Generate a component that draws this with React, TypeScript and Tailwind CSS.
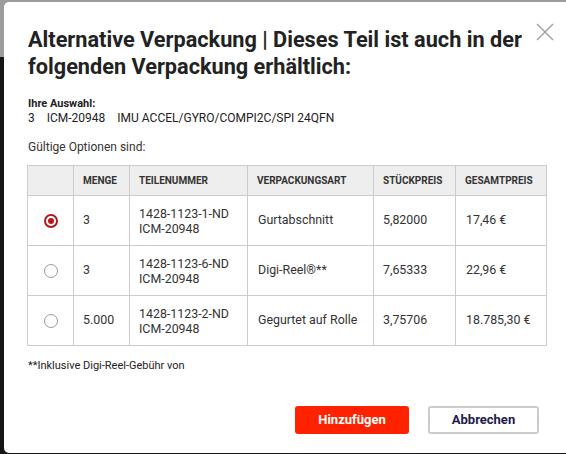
import React from "react";

const rows = [
  { sel: true, qty: "3", pn: ["1428-1123-1-ND", "ICM-20948"], pack: "Gurtabschnitt", unit: "5,82000", total: "17,46 €" },
  { sel: false, qty: "3", pn: ["1428-1123-6-ND", "ICM-20948"], pack: "Digi-Reel®**", unit: "7,65333", total: "22,96 €" },
  { sel: false, qty: "5.000", pn: ["1428-1123-2-ND", "ICM-20948"], pack: "Gegurtet auf Rolle", unit: "3,75706", total: "18.785,30 €" },
];

function Radio({ checked }: { checked: boolean }) {
  return checked ? (
    <span className="flex h-[14px] w-[14px] items-center justify-center rounded-full border-2 border-[#b21a1a]">
      <span className="h-[6px] w-[6px] rounded-full bg-[#b21a1a]" />
    </span>
  ) : (
    <span className="block h-[14px] w-[14px] rounded-full border border-[#9a9a9a] bg-white" />
  );
}

export default function App() {
  return (
    <div
      className="relative h-[454px] w-[566px] overflow-hidden bg-[#161616] pl-[4px] pt-[2px]"
      style={{ fontFamily: "Roboto, 'Noto Sans', sans-serif" }}
    >
      <div className="absolute left-0 top-0 h-[57px] w-full bg-[#9c9c9c]" />
      <div className="relative h-[451px] w-[600px] rounded-[5px] bg-white pl-[24px] pt-[24px] text-[#333]">
        <button className="absolute left-[531px] top-[20px] flex h-[20px] w-[20px] items-center justify-center">
          <svg width="18" height="18" viewBox="0 0 18 18">
            <path d="M1 1 L17 17 M17 1 L1 17" stroke="#9a9a9a" strokeWidth="1.3" fill="none" />
          </svg>
        </button>
        <h1 className="w-[520px] text-[21.7px] font-bold leading-[27px] text-[#222]">
          Alternative Verpackung | Dieses Teil ist auch in der folgenden Verpackung erhältlich:
        </h1>
        <div className="mt-[17px] text-[11px] leading-[14px] text-[#222]">
          <div className="font-bold">Ihre Auswahl:</div>
          <div className="flex gap-[12px] text-[12px]">
            <span>3</span>
            <span>ICM-20948</span>
            <span>IMU ACCEL/GYRO/COMPI2C/SPI 24QFN</span>
          </div>
        </div>
        <div className="mt-[15px] text-[12px] leading-[14px] text-[#333]">Gültige Optionen sind:</div>
        <table className="mt-[11px] w-[520px] -ml-[1px] border-collapse text-[12.4px] text-[#333]">
          <thead>
            <tr className="h-[30px] bg-[#eeeeee] text-left text-[10px] font-bold uppercase">
              <th className="w-[46px] border border-[#cccccc]"></th>
              <th className="w-[56px] border border-[#cccccc] pl-[9px]">Menge</th>
              <th className="w-[118px] border border-[#cccccc] pl-[9px]">Teilenummer</th>
              <th className="w-[126px] border border-[#cccccc] pl-[9px]">Verpackungsart</th>
              <th className="w-[82px] border border-[#cccccc] pl-[9px]">Stückpreis</th>
              <th className="border border-[#cccccc] pl-[9px]">Gesamtpreis</th>
            </tr>
          </thead>
          <tbody>
            {rows.map((r, i) => (
              <tr key={i} className="h-[50px]">
                <td className="border border-[#cccccc]">
                  <div className="flex justify-center">
                    <Radio checked={r.sel} />
                  </div>
                </td>
                <td className="border border-[#cccccc] pl-[9px]">{r.qty}</td>
                <td className="border border-[#cccccc] pl-[9px] leading-[15px]">
                  <div>{r.pn[0]}</div>
                  <div>{r.pn[1]}</div>
                </td>
                <td className="border border-[#cccccc] pl-[10px]">{r.pack}</td>
                <td className="border border-[#cccccc] pl-[9px]">{r.unit}</td>
                <td className="border border-[#cccccc] pl-[10px]">{r.total}</td>
              </tr>
            ))}
          </tbody>
        </table>
        <div className="mt-[13px] text-[11px] leading-[14px] text-[#222]">**Inklusive Digi-Reel-Gebühr von</div>
        <div className="mt-[33px] flex w-[511px] justify-end gap-[19px]">
          <button className="h-[28px] w-[114px] rounded-[3px] bg-[#ff2200] text-[13px] font-bold text-white">
            Hinzufügen
          </button>
          <button className="h-[28px] w-[111px] rounded-[3px] border-2 border-[#cccccc] bg-white text-[13px] font-bold text-[#1e1b4b]">
            Abbrechen
          </button>
        </div>
      </div>
    </div>
  );
}
